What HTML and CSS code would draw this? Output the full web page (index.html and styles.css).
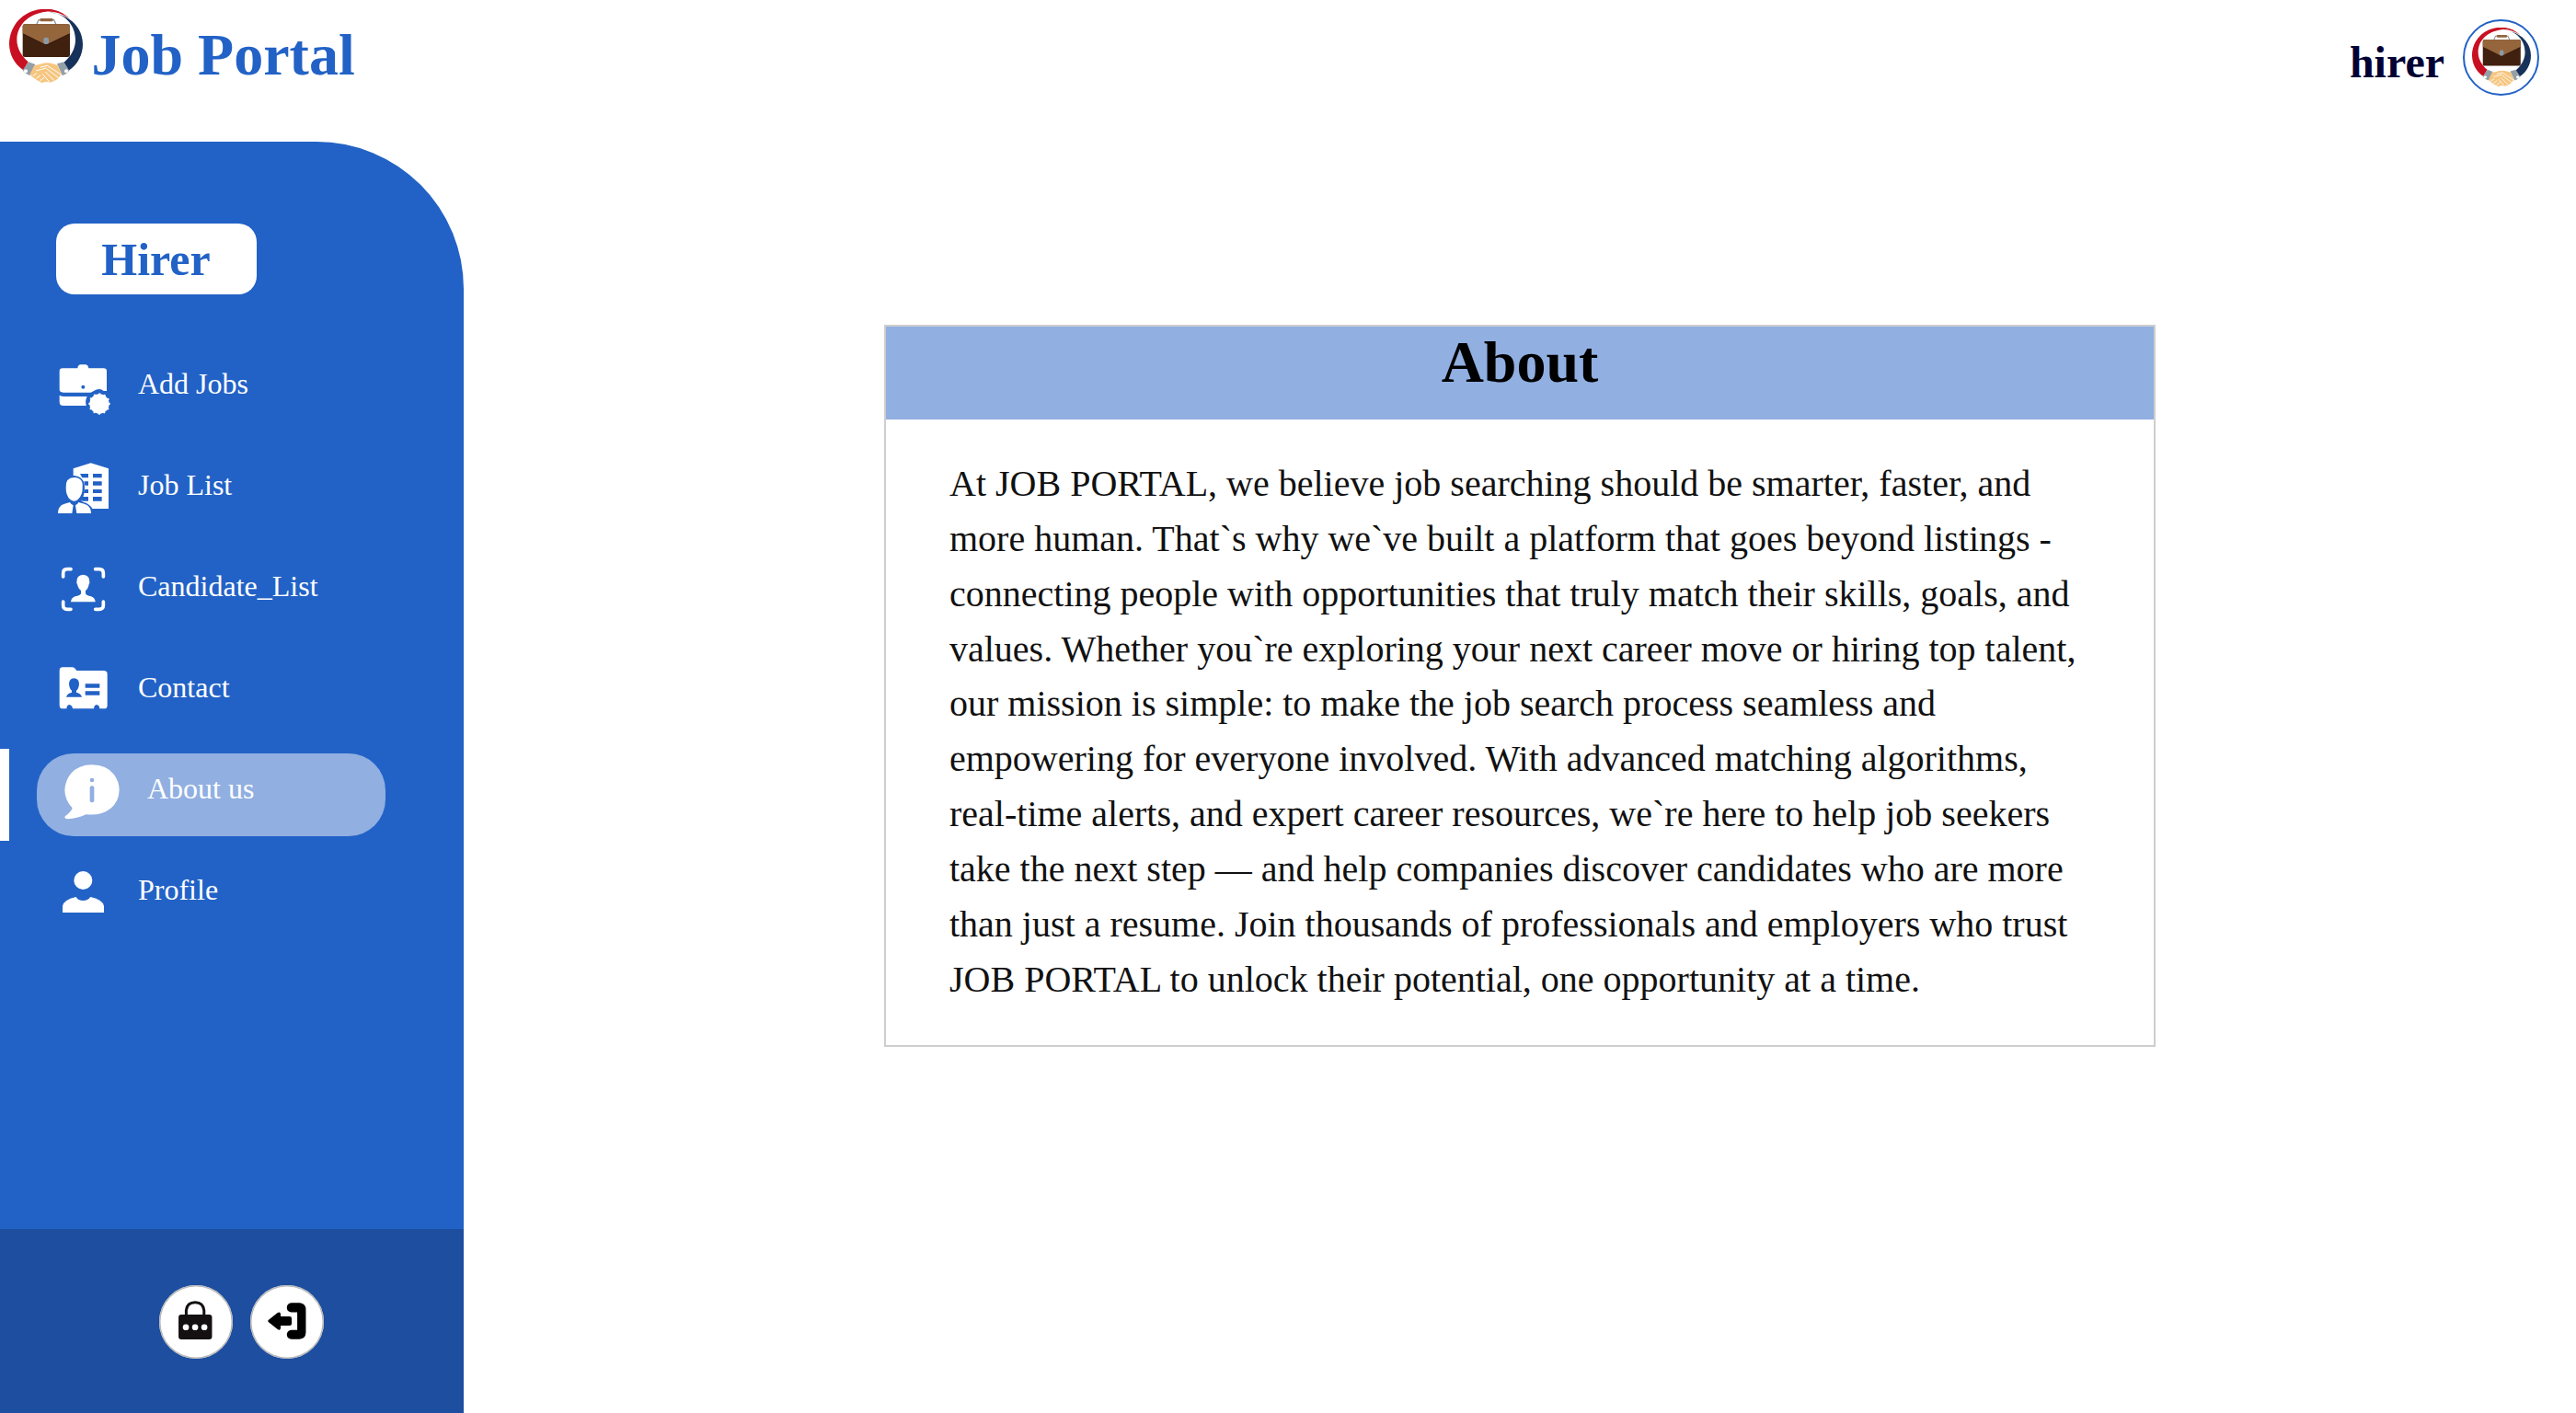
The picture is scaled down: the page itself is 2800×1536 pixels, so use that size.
FILE: index.html
```html
<!DOCTYPE html>
<html lang="en">
<head>
<meta charset="utf-8">
<title>Job Portal</title>
<link rel="stylesheet" href="styles.css">
</head>
<body>
<svg class="defs" aria-hidden="true">
  <symbol id="logo" viewBox="30 30 240 240">
    <path d="M92 202C70 182 55 158 55 130C56 84 88 46 150 38C175 36 200 43 226 60C204 39 178 29 148 29C82 30 32 76 30 144C31 176 44 206 76 229Z" fill="#c81022"/>
    <path d="M160 40C210 42 246 82 246 130C246 158 232 184 208 204L224 230C254 210 270 178 270 144C270 94 232 48 160 40Z" fill="#17325a"/>
    <path d="M119 80L126 65H176L183 80" fill="none" stroke="#8b98a3" stroke-width="4"/>
    <rect x="130" y="60" width="43" height="10" rx="4" fill="#95653c"/>
    <rect x="74" y="79" width="154" height="107" rx="7" fill="#40200f"/>
    <path d="M81 79H221Q228 79 228 86V109L155 144Q150 146 145 144L74 109V86Q74 79 81 79Z" fill="#95653c"/>
    <path d="M76 111L145 145Q150 148 155 145L226 111" fill="none" stroke="#2c170c" stroke-width="2"/>
    <rect x="142" y="122" width="17" height="22" rx="7" fill="#8b9ba6"/>
    <path d="M93 202L115 210L98 246Q82 242 74 229Z" fill="#939fa7"/>
    <path d="M208 202L186 208L203 246Q218 242 226 230Z" fill="#939fa7"/>
    <circle cx="84" cy="232" r="6" fill="#fff"/><circle cx="216" cy="232" r="6" fill="#fff"/>
    <path d="M112 213L129 210Q149 201 172 208L187 212L201 241L190 256L178 264L163 269L150 266L136 270L121 262L104 250L98 241Z" fill="#f6c680"/>
    <path d="M132 219L154 214L199 243M119 230L137 226L150 222M153 225L190 253M149 235L176 262M139 242L161 267M108 247L119 240M119 255L131 247M131 263L143 254" fill="none" stroke="#fff" stroke-width="3" stroke-linecap="round"/>
  </symbol>
</svg>
<header class="topbar">
  <div class="brand">
    <svg class="brand-logo"><use href="#logo"/></svg>
    <h1 class="brand-name">Job Portal</h1>
  </div>
  <div class="account">
    <span class="account-name">hirer</span>
    <span class="avatar"><svg class="avatar-logo"><use href="#logo"/></svg></span>
  </div>
</header>
<div class="shell">
  <aside class="sidebar">
    <div class="role">Hirer</div>
    <nav class="menu">
      <a class="item">
        <svg class="icon" viewBox="60 21 192 240">
          <path d="M84 91H133Q134 79 144 79H158Q167 79 169 91H218Q228 91 228 101V165H218Q211 159 204 159Q195 159 184 166Q180 170 174 170H86Q74 170 74 160V101Q74 91 84 91Z"/>
          <path d="M74 179Q80 183 89 183H164Q157 195 161 213H86Q74 213 74 201Z"/>
          <circle cx="204" cy="207" r="32"/>
          <circle cx="204" cy="207" r="32" fill="none" stroke="#fff" stroke-width="7" stroke-linecap="round" stroke-dasharray="0 16.755"/>
          <circle cx="151" cy="152" r="6" class="cut"/>
        </svg>
        <span>Add Jobs</span>
      </a>
      <a class="item">
        <svg class="icon" viewBox="60 351 192 240">
          <path d="M119 418L176 400L234 418V549H181Q172 532 151 527L145 522Q156 506 156 480Q156 445 122 441Q119 441 119 441Z"/>
          <path class="cut" d="M141 435H168V448H148ZM154 460H168V473H157ZM157 486H168V498H153ZM149 510H168V524H150L144 520ZM183 435H212V448H183ZM183 460H212V473H183ZM183 486H212V498H183ZM183 510H212V524H183Z"/>
          <path d="M122 447Q152 448 149 479Q150 504 134 519Q122 530 109 519Q94 505 95 479Q93 448 122 447Z"/>
          <path d="M69 564Q69 546 81 537Q90 532 108 528Q110 534 119 538L115 564ZM177 564Q177 546 164 537Q155 532 136 528Q134 534 126 538L130 564Z"/>
        </svg>
        <span>Job List</span>
      </a>
      <a class="item">
        <svg class="icon" viewBox="60 22 192 240">
          <path fill="none" stroke="#fff" stroke-width="11" stroke-linecap="round" d="M86 112V100Q86 87 99 87H111M191 87H203Q217 87 217 100V112M217 193V205Q217 218 203 218H191M111 218H99Q86 218 86 205V193"/>
          <path d="M151 105Q173 106 172 129Q173 133 170 136Q168 151 159 157V167Q161 173 177 176Q190 181 191 194H111Q112 181 125 176Q142 173 144 167V157Q135 151 132 136Q129 133 130 129Q129 106 151 105Z"/>
        </svg>
        <span>Candidate_List</span>
      </a>
      <a class="item">
        <svg class="icon" viewBox="60 353 192 240">
          <path d="M84 408H116Q122 408 126 414L130 419H218Q230 419 230 430V532Q230 543 220 543H205Q204 531 195 530Q187 531 186 543H117Q115 531 106 530Q98 531 97 543H84Q74 543 74 532V419Q74 408 84 408Z"/>
          <path class="cut" d="M121 444Q138 445 138 463Q136 480 129 484V490Q144 493 147 505H96Q99 493 114 490V484Q107 480 105 463Q105 445 121 444ZM158 462H205V475H158ZM158 486H205V499H158Z"/>
        </svg>
        <span>Contact</span>
      </a>
      <a class="item item-active">
        <span class="marker"></span>
        <span class="pill">
          <svg class="icon" viewBox="210 57 192 240">
            <path d="M300 94Q349 95 372 126Q389 150 389 176Q388 214 361 236Q330 261 281 256Q252 269 220 271Q206 268 214 260Q233 248 236 235Q211 208 211 176Q213 145 231 123Q256 94 300 94Z"/>
            <g class="cut-light"><circle cx="300" cy="144" r="7"/><rect x="293" y="163" width="14" height="54" rx="6"/></g>
          </svg>
          <span>About us</span>
        </span>
      </a>
      <a class="item">
        <svg class="icon" viewBox="180 384 192 240">
          <circle cx="271" cy="474" r="30"/>
          <path d="M204 579V558Q206 538 248 528Q254 540 271 540Q287 540 295 528Q337 538 339 558V579Z"/>
        </svg>
        <span>Profile</span>
      </a>
    </nav>
    <div class="actions">
      <button class="round" aria-label="Change password">
        <svg viewBox="99 231 238 238">
          <path d="M187 330V313Q190 287 216 287Q242 287 245 313V330" fill="none" stroke="#141011" stroke-width="9"/>
          <rect x="162" y="327" width="109" height="81" rx="9" fill="#141011"/>
          <g fill="#fff"><circle cx="186" cy="368" r="10"/><circle cx="216" cy="368" r="10"/><circle cx="246" cy="368" r="10"/></g>
        </svg>
      </button>
      <button class="round" aria-label="Log out">
        <svg viewBox="397 231 238 238">
          <path d="M531 289H558Q578 291 578 311V386Q577 405 557 407H531Q517 406 516 392Q517 378 531 377H550V319H531Q517 318 516 304Q517 290 531 289Z"/>
          <path d="M456 345L486 321Q495 316 496 326V333H525Q532 333 532 340V356Q532 363 525 363H496V371Q494 380 486 375L456 351Q453 348 456 345Z"/>
        </svg>
      </button>
    </div>
  </aside>
  <main class="content">
    <section class="card">
      <h2 class="card-title">About</h2>
      <p class="card-text">At JOB PORTAL, we believe job searching should be smarter, faster, and more human. That`s why we`ve built a platform that goes beyond listings - connecting people with opportunities that truly match their skills, goals, and values. Whether you`re exploring your next career move or hiring top talent, our mission is simple: to make the job search process seamless and empowering for everyone involved. With advanced matching algorithms, real-time alerts, and expert career resources, we`re here to help job seekers take the next step — and help companies discover candidates who are more than just a resume. Join thousands of professionals and employers who trust JOB PORTAL to unlock their potential, one opportunity at a time.</p>
    </section>
  </main>
</div>
</body>
</html>
```

FILE: styles.css
```css
* { box-sizing: border-box; }
body {
  margin: 0;
  height: 1536px;
  display: flex;
  flex-direction: column;
  background: #fff;
  font-family: "Liberation Serif", serif;
  overflow: hidden;
}
h1, h2, p { margin: 0; }
.defs { display: none; }

.topbar {
  height: 153.5px;
  flex: none;
  display: flex;
  justify-content: space-between;
  align-items: flex-start;
  padding: 10px 40px 0 10px;
}
.brand { display: flex; gap: 9.5px; }
.brand-logo { width: 80px; height: 80px; }
.brand-name {
  margin-top: 13.5px;
  font-size: 64px;
  line-height: 72px;
  color: #2262c6;
}
.account { display: flex; gap: 20px; padding-top: 10.5px; }
.account-name {
  margin-top: 20px;
  font-size: 48px;
  line-height: 54px;
  font-weight: bold;
  color: #000033;
}
.avatar {
  width: 83px;
  height: 83px;
  border: 2px solid #2262c6;
  border-radius: 50%;
  display: flex;
  align-items: center;
  justify-content: center;
}
.avatar-logo { width: 64px; height: 64px; }

.shell { flex: 1; display: flex; }
.sidebar {
  width: 504px;
  display: flex;
  flex-direction: column;
  background: #2262c6;
  border-top-right-radius: 160px;
  color: #fff;
}
.role {
  width: 218px;
  height: 77px;
  margin: 89.5px 0 0 60.5px;
  border-radius: 20px;
  background: #fff;
  color: #2262c6;
  font-size: 50px;
  font-weight: bold;
  line-height: 78px;
  text-align: center;
}
.menu { margin-top: 42px; flex: 1; }
.item {
  height: 110px;
  display: flex;
  align-items: center;
  gap: 26px;
  padding-left: 60px;
  font-size: 32px;
  line-height: 36px;
}
.icon { width: 64px; height: 80px; fill: #fff; flex: none; }
.cut { fill: #2262c6; }
.cut-light { fill: #91afe1; }
.item-active { padding-left: 0; gap: 30px; align-items: flex-start; }
.marker { width: 10px; height: 100px; margin-top: 12px; background: #fff; }
.pill {
  width: 379px;
  height: 90px;
  margin-top: 17px;
  padding-left: 30px;
  display: flex;
  gap: 26px;
  border-radius: 40px;
  background: #91afe1;
}
.pill span { margin-top: 20px; }

.actions {
  height: 200px;
  flex: none;
  display: flex;
  gap: 19.5px;
  padding: 61px 0 0 173px;
  background: #1d4e9f;
}
.round {
  width: 79.5px;
  height: 79.5px;
  padding: 0;
  border: 0;
  border-radius: 50%;
  background: #fff;
  box-shadow: inset 0 0 0 1.5px #b8b8b8;
}
.round svg { display: block; width: 100%; height: 100%; }

.content { flex: 1; padding: 199.5px 0 0 457px; }
.card {
  width: 1382px;
  height: 785px;
  border: 2px solid #cecece;
}
.card-title {
  height: 101px;
  padding-top: 3px;
  background: #91afe1;
  color: #000;
  font-size: 64px;
  line-height: 72px;
  text-align: center;
}
.card-text {
  padding: 39.8px 68px 0 69px;
  color: #111;
  font-size: 40px;
  line-height: 59.9px;
}
```
